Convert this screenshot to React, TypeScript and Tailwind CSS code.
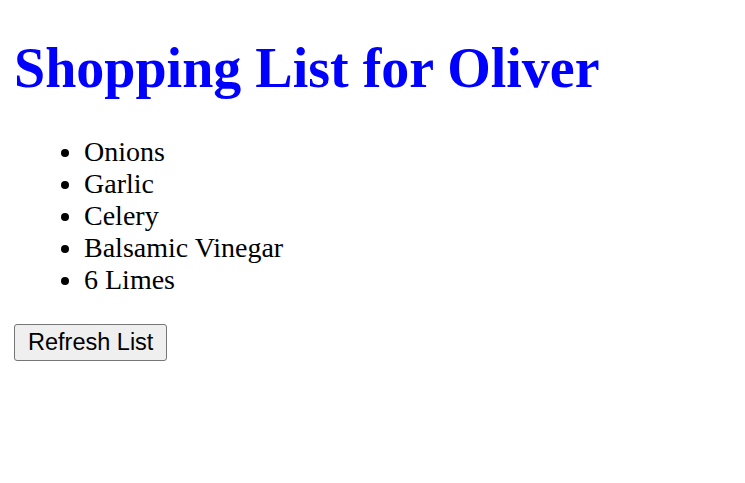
const items = ["Onions", "Garlic", "Celery", "Balsamic Vinegar", "6 Limes"];

export default function App() {
  return (
    <div className="min-h-screen bg-white px-[14px] py-px font-['Liberation_Serif',serif] text-black">
      <h1 className="mt-[35px] mb-[36px] text-[56px] leading-[64px] font-bold text-[#0000ff]">
        Shopping List for Oliver
      </h1>
      <ul className="my-[28px] list-disc pl-[70px] text-[28px] leading-[32px]">
        {items.map((item) => (
          <li key={item}>{item}</li>
        ))}
      </ul>
      <button className="h-[37px] rounded-[3px] border border-[#767676] bg-[#efefef] px-[13px] font-['Liberation_Sans',Arial,sans-serif] text-[23.5px] leading-[27px] text-black">
        Refresh List
      </button>
    </div>
  );
}
